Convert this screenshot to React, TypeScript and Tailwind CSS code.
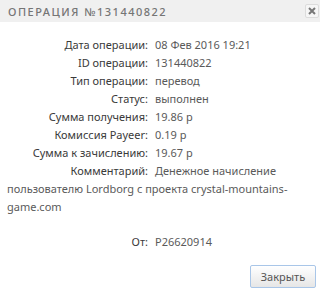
import React from "react";

const rows: [string, string][] = [
  ["Дата операции:", "08 Фев 2016 19:21"],
  ["ID операции:", "131440822"],
  ["Тип операции:", "перевод"],
  ["Статус:", "выполнен"],
  ["Сумма получения:", "19.86 р"],
  ["Комиссия Payeer:", "0.19 р"],
  ["Сумма к зачислению:", "19.67 р"],
];

export default function App() {
  return (
    <div
      className="w-[320px] h-[292px] bg-white overflow-hidden"
      style={{ fontFamily: '"Noto Sans", "Open Sans", sans-serif' }}
    >
      <div className="h-[22px] bg-[#f0f0f0] flex items-center justify-between pl-[8px] pr-[1px]">
        <span className="text-[11px] tracking-[1.5px] text-[#757575] font-medium leading-none">
          ОПЕРАЦИЯ №131440822
        </span>
        <span className="w-[14px] h-[14px] border border-[#dcdcdc] bg-[#f6f6f6] rounded-[2px] flex items-center justify-center">
          <svg width="8" height="8" viewBox="0 0 8 8">
            <path d="M1 1L7 7M7 1L1 7" stroke="#777" strokeWidth="2" />
          </svg>
        </span>
      </div>
      <div className="pt-[14px] px-[7px] text-[11px] leading-[18px] text-[#5a5a5a]">
        {rows.map(([l, v]) => (
          <div key={l}>
            <span className="inline-block w-[141px] text-right text-[#3a3a3a]">{l}</span>
            <span className="ml-[7px]">{v}</span>
          </div>
        ))}
        <div>
          <span className="float-left w-[141px] text-right text-[#3a3a3a] mr-[7px]">Комментарий:</span>
          <span>
            Денежное начисление пользователю Lordborg с проекта crystal-mountains-game.com
          </span>
        </div>
        <div className="mt-[17px] clear-both">
          <span className="inline-block w-[141px] text-right text-[#3a3a3a]">От:</span>
          <span className="ml-[7px]">P26620914</span>
        </div>
        <div className="flex justify-end mt-[14px]">
          <button className="w-[66px] h-[23px] border border-[#a9c6e8] rounded-[2px] bg-gradient-to-b from-white to-[#e6e6e6] text-[11px] text-[#555] mr-[-3px]">
            Закрыть
          </button>
        </div>
      </div>
    </div>
  );
}
